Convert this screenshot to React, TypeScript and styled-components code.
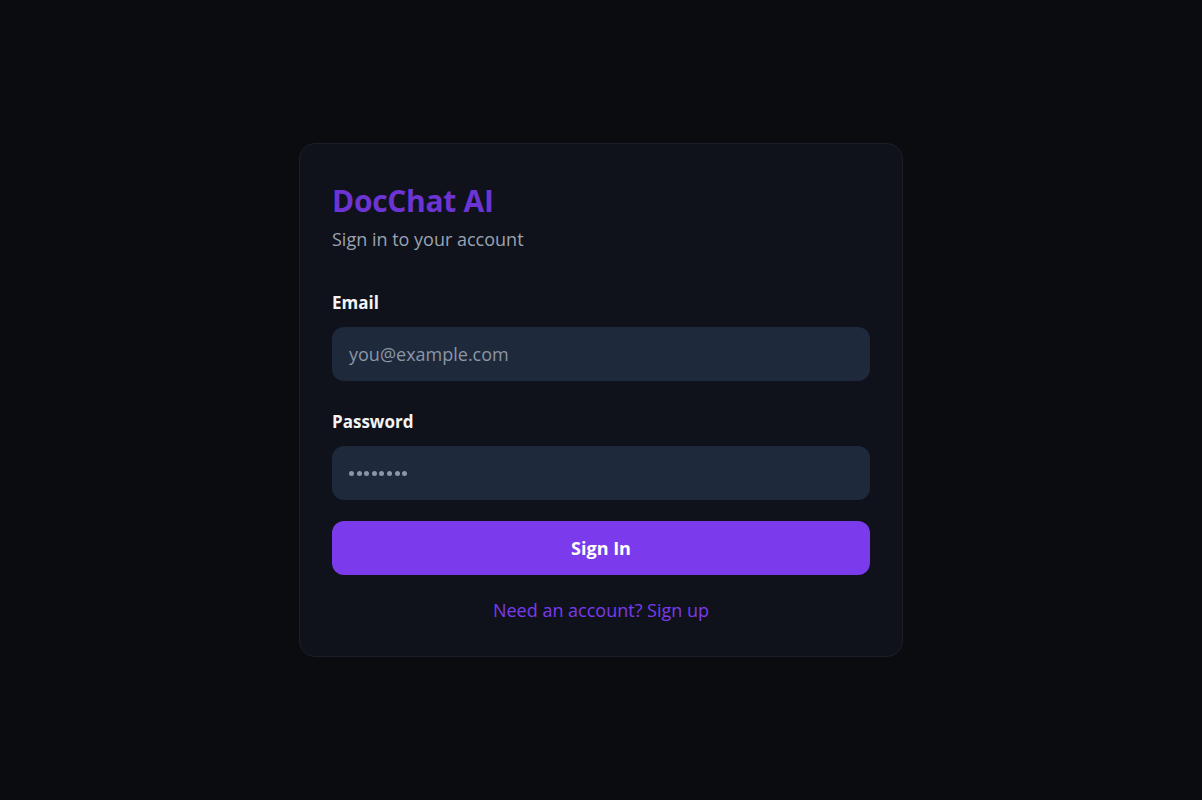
import React from "react";
import styled, { createGlobalStyle } from "styled-components";

const Global = createGlobalStyle`
  * { box-sizing: border-box; }
  html, body { margin: 0; padding: 0; background: #0a0c10; }
  body { font-family: "Open Sans", "Noto Sans", sans-serif; }
`;

const Page = styled.main`
  min-height: 100vh;
  display: flex;
  align-items: center;
  justify-content: center;
  background: #0a0c10;
`;

const Card = styled.form`
  width: 604px;
  padding: 32px;
  background: #0f121a;
  border: 1px solid #1b1f29;
  border-radius: 16px;
  display: flex;
  flex-direction: column;
`;

const Title = styled.h1`
  margin: 0;
  font-size: 30px;
  line-height: 49px;
  font-weight: 700;
  color: #6d34d4;
  letter-spacing: -0.3px;
`;

const Subtitle = styled.p`
  margin: 0 0 37px;
  font-size: 18px;
  line-height: 28px;
  color: #9aa3b2;
`;

const Field = styled.div<{ $mb: number }>`
  display: flex;
  flex-direction: column;
  gap: 11px;
  margin-bottom: ${(p) => p.$mb}px;
`;

const Label = styled.label`
  font-size: 17px;
  line-height: 26px;
  font-weight: 700;
  color: #f3f4f6;
`;

const Input = styled.input`
  height: 54px;
  width: 100%;
  padding: 0 17px;
  border: none;
  outline: none;
  border-radius: 12px;
  background: #1e293b;
  color: #e5e7eb;
  font-family: inherit;
  font-size: 18px;
  &::placeholder { color: #8b96a8; }
`;

const Dots = styled.div`
  height: 54px;
  width: 100%;
  padding: 0 17px;
  border-radius: 12px;
  background: #1e293b;
  display: flex;
  align-items: center;
  gap: 2.6px;
`;

const Dot = styled.span`
  width: 5px;
  height: 5px;
  border-radius: 50%;
  background: #8b96a8;
`;

const Button = styled.button`
  height: 54px;
  width: 100%;
  border: none;
  border-radius: 12px;
  background: #7c3aed;
  color: #ffffff;
  font-family: inherit;
  font-size: 18px;
  font-weight: 700;
  cursor: pointer;
`;

const Link = styled.a`
  margin-top: 21px;
  text-align: center;
  font-size: 18px;
  line-height: 28px;
  color: #7c3aed;
  text-decoration: none;
`;

export default function App() {
  return (
    <>
      <Global />
      <Page>
        <Card onSubmit={(e) => e.preventDefault()}>
          <Title>DocChat AI</Title>
          <Subtitle>Sign in to your account</Subtitle>
          <Field $mb={28}>
            <Label>Email</Label>
            <Input placeholder="you@example.com" />
          </Field>
          <Field $mb={21}>
            <Label>Password</Label>
            <Dots>
              {Array.from({ length: 8 }).map((_, i) => (
                <Dot key={i} />
              ))}
            </Dots>
          </Field>
          <Button type="submit">Sign In</Button>
          <Link href="#">Need an account? Sign up</Link>
        </Card>
      </Page>
    </>
  );
}
